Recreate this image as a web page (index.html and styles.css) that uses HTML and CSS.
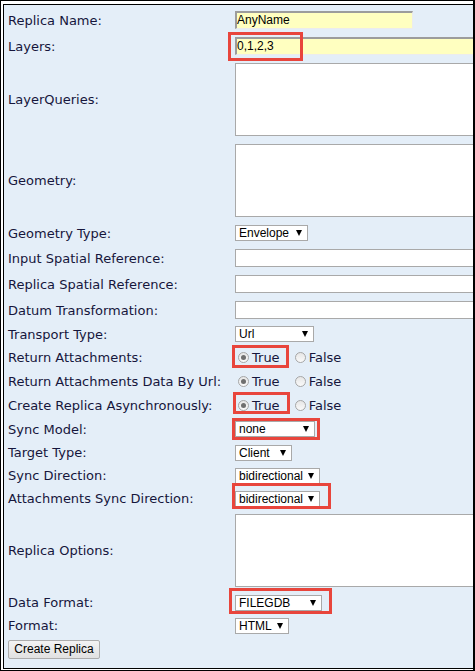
FILE: index.html
```html
<!DOCTYPE html>
<html>
<head>
<meta charset="utf-8">
<link rel="stylesheet" href="styles.css">
</head>
<body>
<div class="frame">
  <div class="panel">
    <div class="row h26"><div class="label">Replica Name:</div><div class="ctl"><span class="field yellow w178">AnyName</span></div></div>
    <div class="row h26"><div class="label">Layers:</div><div class="ctl"><span class="field yellow wide">0,1,2,3</span></div></div>
    <div class="row h81"><div class="label">LayerQueries:</div><div class="ctl"><span class="area"></span></div></div>
    <div class="row h81"><div class="label">Geometry:</div><div class="ctl"><span class="area"></span></div></div>
    <div class="row h24"><div class="label">Geometry Type:</div><div class="ctl"><span class="select w73">Envelope</span></div></div>
    <div class="row h26"><div class="label">Input Spatial Reference:</div><div class="ctl"><span class="field wide"></span></div></div>
    <div class="row h26"><div class="label">Replica Spatial Reference:</div><div class="ctl"><span class="field wide"></span></div></div>
    <div class="row h26"><div class="label">Datum Transformation:</div><div class="ctl"><span class="field wide"></span></div></div>
    <div class="row h22"><div class="label">Transport Type:</div><div class="ctl"><span class="select w79">Url</span></div></div>
    <div class="row h24"><div class="label">Return Attachments:</div><div class="ctl radios"><span class="radio on"></span><span class="opt">True</span><span class="radio second"></span><span class="opt">False</span></div></div>
    <div class="row h24"><div class="label">Return Attachments Data By Url:</div><div class="ctl radios"><span class="radio on"></span><span class="opt">True</span><span class="radio second"></span><span class="opt">False</span></div></div>
    <div class="row h24"><div class="label">Create Replica Asynchronously:</div><div class="ctl radios"><span class="radio on"></span><span class="opt">True</span><span class="radio second"></span><span class="opt">False</span></div></div>
    <div class="row h24"><div class="label">Sync Model:</div><div class="ctl"><span class="select w80">none</span></div></div>
    <div class="row h23"><div class="label">Target Type:</div><div class="ctl"><span class="select w57">Client</span></div></div>
    <div class="row h23"><div class="label">Sync Direction:</div><div class="ctl"><span class="select w85">bidirectional</span></div></div>
    <div class="row h23"><div class="label">Attachments Sync Direction:</div><div class="ctl"><span class="select w85">bidirectional</span></div></div>
    <div class="row h81"><div class="label">Replica Options:</div><div class="ctl"><span class="area"></span></div></div>
    <div class="row h23"><div class="label">Data Format:</div><div class="ctl"><span class="select w87">FILEGDB</span></div></div>
    <div class="row h23"><div class="label">Format:</div><div class="ctl"><span class="select w54">HTML</span></div></div>
    <div class="row h24"><button class="btn" type="button">Create Replica</button></div>
  </div>
</div>
<span class="mark m-layers"></span>
<span class="mark m-ret"></span>
<span class="mark m-async"></span>
<span class="mark m-sync"></span>
<span class="mark m-attsync"></span>
<span class="mark m-format"></span>
</body>
</html>
```
FILE: styles.css
```css
html, body {
  margin: 0;
  padding: 0;
}
body {
  width: 475px;
  height: 671px;
  overflow: hidden;
  position: relative;
  font-family: "DejaVu Sans", Verdana, sans-serif;
  font-size: 13px;
  background: #fff;
}
.frame {
  box-sizing: border-box;
  width: 475px;
  height: 671px;
  border: 1px solid #000;
  border-right-width: 2px;
  padding: 3px 0 1px 2px;
  background: #fff;
}
.panel {
  box-sizing: border-box;
  height: 665px;
  border: 1px solid #000;
  border-right: 0;
  background: #e4eef8;
  padding: 2px 0 0 4px;
  overflow: hidden;
}
.row {
  display: flex;
  align-items: center;
}
.h22 { height: 22px; }
.h23 { height: 23px; }
.h24 { height: 24px; }
.h26 { height: 26px; }
.h81 { height: 81px; }
.label {
  flex: none;
  width: 227px;
  color: #16163c;
  white-space: nowrap;
}
.ctl {
  flex: none;
  display: flex;
  align-items: center;
}
.field {
  box-sizing: border-box;
  display: block;
  height: 18px;
  border: 1px solid #a9a9a9;
  background: #fff;
  font-family: "Liberation Sans", Arial, sans-serif;
  font-size: 12px;
  line-height: 15px;
  color: #000;
  padding-left: 1px;
}
.field.yellow {
  background: #ffffc0;
  border-top: 2px solid #9c9c9c;
  border-left: 2px solid #9c9c9c;
  border-right: 1px solid #ececec;
  border-bottom: 1px solid #ececec;
  padding-left: 0;
}
.w178 { width: 178px; }
.wide { width: 260px; }
.area {
  box-sizing: border-box;
  display: block;
  width: 260px;
  height: 73px;
  border: 1px solid #a9a9a9;
  background: #fff;
}
.select {
  box-sizing: border-box;
  position: relative;
  display: block;
  height: 16px;
  border: 1px solid #a9a9a9;
  background: #fff;
  font-family: "Liberation Sans", Arial, sans-serif;
  font-size: 12px;
  line-height: 14px;
  color: #000;
  padding-left: 3px;
}
.select::after {
  content: "";
  position: absolute;
  right: 5px;
  top: 4px;
  width: 0;
  height: 0;
  border-left: 3.5px solid transparent;
  border-right: 3.5px solid transparent;
  border-top: 6px solid #000;
}
.w54 { width: 54px; }
.w57 { width: 57px; }
.w73 { width: 73px; }
.w79 { width: 79px; }
.w80 { width: 80px; }
.w85 { width: 85px; }
.w87 { width: 87px; }
.radio {
  box-sizing: border-box;
  display: flex;
  align-items: center;
  justify-content: center;
  width: 11px;
  height: 11px;
  border-radius: 50%;
  border: 1px solid #a6a6a6;
  background: linear-gradient(#e6e6e6, #fafafa);
  margin: 0 3px 0 3px;
}
.radio.second {
  margin-left: 15px;
}
.radio.on::after {
  content: "";
  width: 5px;
  height: 5px;
  border-radius: 50%;
  background: #6f6f6f;
}
.opt {
  color: #16163c;
}
.btn {
  box-sizing: border-box;
  width: 92px;
  height: 19px;
  margin: 0;
  padding: 0;
  border: 1px solid #adadad;
  border-radius: 2px;
  background: linear-gradient(#f3f3f3, #e1e1e1);
  font-family: "Liberation Sans", Arial, sans-serif;
  font-size: 12px;
  color: #000;
}
.mark {
  position: absolute;
  box-sizing: border-box;
  border: 3px solid #e8453c;
}
.m-layers { left: 228px; top: 32px; width: 75px; height: 29px; }
.m-ret { left: 232px; top: 345px; width: 57px; height: 23px; }
.m-async { left: 233px; top: 392px; width: 57px; height: 22px; }
.m-sync { left: 232px; top: 418px; width: 88px; height: 22px; }
.m-attsync { left: 232px; top: 483px; width: 99px; height: 26px; }
.m-format { left: 229px; top: 588px; width: 103px; height: 26px; }
```
